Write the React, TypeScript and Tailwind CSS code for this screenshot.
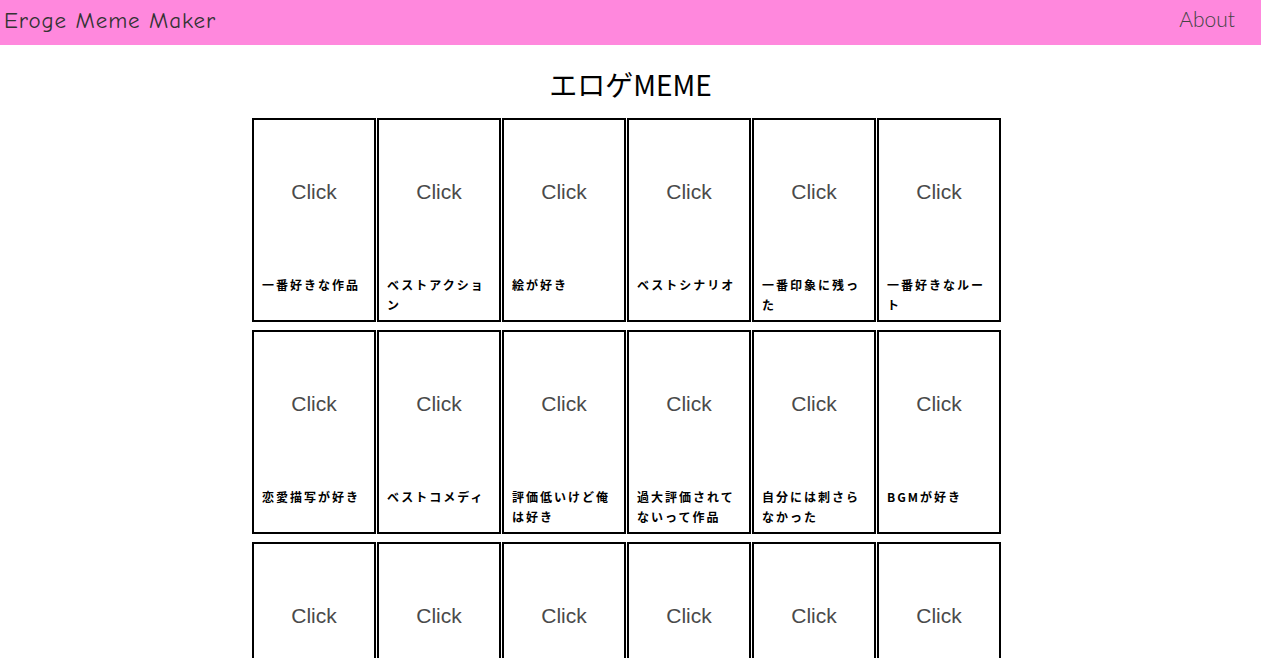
import React from "react";

const labels = [
  "一番好きな作品",
  "ベストアクション",
  "絵が好き",
  "ベストシナリオ",
  "一番印象に残った",
  "一番好きなルート",
  "恋愛描写が好き",
  "ベストコメディ",
  "評価低いけど俺は好き",
  "過大評価されてないって作品",
  "自分には刺さらなかった",
  "BGMが好き",
  "",
  "",
  "",
  "",
  "",
  "",
];

export default function App() {
  return (
    <div className="min-h-screen bg-white">
      <header className="h-[45px] bg-[#ff88dd] flex items-center justify-between pl-[4px] pr-[26px] pb-[4px]">
        <div
          className="text-[23px] leading-[30px] text-[#333] tracking-[0.9px]"
          style={{ fontFamily: '"Comic Neue", Lato, "Noto Sans", sans-serif' }}
        >
          Eroge Meme Maker
        </div>
        <div
          className="text-[21px] leading-[30px] text-[#444] font-light mb-[3px]"
          style={{ fontFamily: 'Lato, "Noto Sans", sans-serif' }}
        >
          About
        </div>
      </header>
      <h1
        className="text-center text-[28px] leading-[36px] text-black mt-[21px] mb-[16px]"
        style={{ fontFamily: '"Noto Sans CJK JP", sans-serif' }}
      >
        エロゲMEME
      </h1>
      <div className="w-[749px] mx-auto -translate-x-[4px] grid grid-cols-[repeat(6,124px)] gap-x-[1px] gap-y-[8px]">
        {labels.map((l, i) => (
          <div
            key={i}
            className="h-[204px] border-2 border-black flex flex-col"
          >
            <div
              className="text-center text-[21px] text-[#4a4a4a] mt-[56px]"
              style={{ fontFamily: '"Liberation Sans", Arial, sans-serif' }}
            >
              Click
            </div>
            <div className="flex-1" />
            <div
              className="px-[8px] pb-[5px] min-h-[45px] text-[12px] leading-[20px] font-bold tracking-[2px] text-black"
              style={{ fontFamily: '"Noto Sans CJK JP", sans-serif' }}
            >
              {l}
            </div>
          </div>
        ))}
      </div>
    </div>
  );
}
